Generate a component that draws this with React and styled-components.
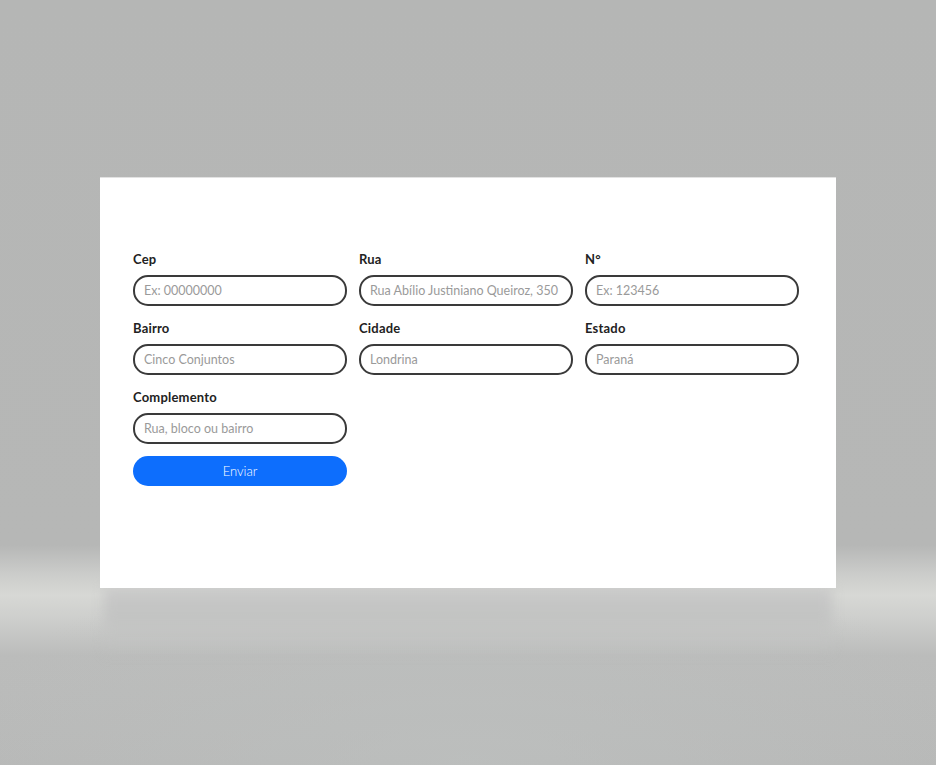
import styled, { createGlobalStyle } from 'styled-components';

const GlobalStyle = createGlobalStyle`
	html, body {
		margin: 0;
		height: 100%;
	}
	body {
		font-family: 'Lato', 'Open Sans', sans-serif;
		background:
			radial-gradient(ellipse 520px 220px at 468px 760px, rgba(190, 193, 192, 0.6), rgba(190, 193, 192, 0) 100%),
			linear-gradient(
				to bottom,
				#b5b6b5 0px,
				#b6b7b6 545px,
				#cccdcb 575px,
				#d7d8d5 595px,
				#cdcecc 620px,
				#bbbcbb 655px,
				#b8b9b8 765px
			);
		background-repeat: no-repeat;
		min-height: 765px;
	}
	#root {
		height: 765px;
	}
`;

const fields = [
	{ label: 'Cep', placeholder: 'Ex: 00000000' },
	{ label: 'Rua', placeholder: 'Rua Abílio Justiniano Queiroz, 350' },
	{ label: 'N°', placeholder: 'Ex: 123456' },
	{ label: 'Bairro', placeholder: 'Cinco Conjuntos' },
	{ label: 'Cidade', placeholder: 'Londrina' },
	{ label: 'Estado', placeholder: 'Paraná' },
	{ label: 'Complemento', placeholder: 'Rua, bloco ou bairro' },
];

export default function App() {
	return (
		<>
			<GlobalStyle />
			<Overlay>
				<Modal>
					<Form onSubmit={(e) => e.preventDefault()}>
						{fields.map((f) => (
							<Field key={f.label}>
								<Label>{f.label}</Label>
								<Input placeholder={f.placeholder} />
							</Field>
						))}
						<ButtonCell>
							<SubmitButton type='submit'>Enviar</SubmitButton>
						</ButtonCell>
					</Form>
				</Modal>
			</Overlay>
		</>
	);
}

const Overlay = styled.div`
	height: 765px;
	display: flex;
	align-items: center;
	justify-content: center;
`;

const Modal = styled.div`
	position: relative;
	width: 736px;
	height: 411px;
	box-sizing: border-box;
	background: #fff;
	border-top: 1px solid #e2e2e2;
	padding: 73px 37px 0 33px;

	/* soft shadow cast below the card */
	&::after {
		content: '';
		position: absolute;
		top: 100%;
		left: 4px;
		right: 4px;
		height: 70px;
		background: linear-gradient(to bottom, #c9c9c9 0%, #c2c3c2 40%, rgba(187, 188, 187, 0) 100%);
		filter: blur(6px);
		z-index: -1;
	}
`;

const Form = styled.form`
	display: grid;
	grid-template-columns: repeat(3, 214px);
	column-gap: 12px;
	row-gap: 14px;
`;

const Field = styled.div`
	display: flex;
	flex-direction: column;
`;

const Label = styled.label`
	font-size: 13px;
	line-height: 16px;
	font-weight: 700;
	letter-spacing: 0.2px;
	color: #222;
	margin-bottom: 8px;
`;

const Input = styled.input`
	all: unset;
	box-sizing: border-box;
	height: 31px;
	width: 100%;
	border: 2px solid #3a3a3a;
	border-radius: 15px;
	padding: 0 9px;
	font-family: 'Lato', 'Open Sans', sans-serif;
	font-size: 12.5px;
	color: #333;

	&::placeholder {
		color: #9a9a9a;
	}
`;

const ButtonCell = styled.div`
	grid-column: 1;
	margin-top: -2px;
`;

const SubmitButton = styled.button`
	width: 100%;
	height: 30px;
	border: none;
	border-radius: 15px;
	background: #0d6efd;
	color: #fff;
	font-family: 'Lato', 'Open Sans', sans-serif;
	font-size: 13px;
	font-weight: 300;
	cursor: pointer;
`;
